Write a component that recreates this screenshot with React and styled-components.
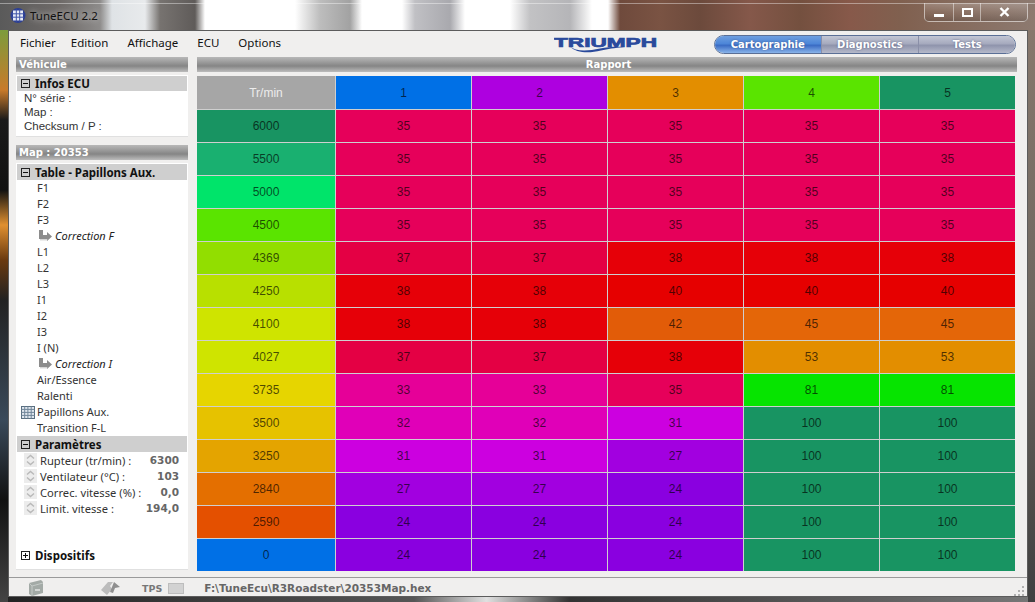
import React from 'react';
import styled, { createGlobalStyle } from 'styled-components';

const GlobalStyle = createGlobalStyle`
  html, body {
    margin: 0;
    padding: 0;
    overflow: hidden;
    background: #222;
  }
`;

const UI_FONT = '"Noto Sans", "DejaVu Sans", sans-serif';
const BOLD_FONT = '"DejaVu Sans", "Noto Sans", sans-serif';
const CELL_FONT = '"Liberation Sans", Arial, sans-serif';

const VALUE_COLORS = {
  24: '#8a00e0',
  27: '#a200e0',
  31: '#cc00e0',
  32: '#e000b8',
  33: '#e60098',
  35: '#e6005a',
  37: '#e40044',
  38: '#e60008',
  40: '#e60000',
  42: '#e25c08',
  45: '#e46608',
  53: '#e38e00',
  81: '#06e400',
  100: '#189462',
};

const HEADERS = [
  { label: '1', color: '#0070e6' },
  { label: '2', color: '#ae00e0' },
  { label: '3', color: '#e38e00' },
  { label: '4', color: '#5ae400' },
  { label: '5', color: '#189462' },
];

const ROWS = [
  { rpm: 6000, color: '#189462', values: [35, 35, 35, 35, 35] },
  { rpm: 5500, color: '#19b070', values: [35, 35, 35, 35, 35] },
  { rpm: 5000, color: '#00e46a', values: [35, 35, 35, 35, 35] },
  { rpm: 4500, color: '#5ae400', values: [35, 35, 35, 35, 35] },
  { rpm: 4369, color: '#92de00', values: [37, 37, 38, 38, 38] },
  { rpm: 4250, color: '#b8e000', values: [38, 38, 40, 40, 40] },
  { rpm: 4100, color: '#cfe400', values: [38, 38, 42, 45, 45] },
  { rpm: 4027, color: '#cfe400', values: [37, 37, 38, 53, 53] },
  { rpm: 3735, color: '#e6d500', values: [33, 33, 35, 81, 81] },
  { rpm: 3500, color: '#e6c200', values: [32, 32, 31, 100, 100] },
  { rpm: 3250, color: '#e4a400', values: [31, 31, 27, 100, 100] },
  { rpm: 2840, color: '#e46f00', values: [27, 27, 24, 100, 100] },
  { rpm: 2590, color: '#e45000', values: [24, 24, 24, 100, 100] },
  { rpm: 0, color: '#0070e6', values: [24, 24, 24, 100, 100] },
];

const PARAMS = [
  { label: 'Rupteur (tr/min) :', value: '6300' },
  { label: 'Ventilateur (°C) :', value: '103' },
  { label: 'Correc. vitesse (%) :', value: '0,0' },
  { label: 'Limit. vitesse :', value: '194,0' },
];

function ExpandBox({ open }) {
  return (
    <svg width="9" height="9" viewBox="0 0 9 9" style={{ flexShrink: 0 }}>
      <rect x="0.5" y="0.5" width="8" height="8" fill="none" stroke="#222" />
      <path d="M2 4.5H7" stroke="#111" />
      {!open && <path d="M4.5 2V7" stroke="#111" />}
    </svg>
  );
}

function AppIcon() {
  return (
    <svg width="16" height="17" viewBox="0 0 16 17">
      <circle cx="8" cy="8.5" r="7.5" fill="#2c3f94" />
      <rect x="3" y="3.5" width="10" height="10" fill="#e8ecf6" />
      <path d="M6.3 2.5V14.5M9.7 2.5V14.5M2 6.8H14M2 10.2H14" stroke="#3f55a8" />
    </svg>
  );
}

function TableIcon() {
  return (
    <svg width="14" height="13" viewBox="0 0 14 13" style={{ flexShrink: 0 }}>
      <rect x="0.5" y="0.5" width="13" height="12" fill="#dfe6ee" stroke="#5a6f80" />
      <path d="M3.7 0.5V12.5M6.9 0.5V12.5M10.2 0.5V12.5M0.5 3.4H13.5M0.5 6.4H13.5M0.5 9.4H13.5" stroke="#71879a" />
    </svg>
  );
}

function CornerArrow() {
  return (
    <svg width="13" height="12" viewBox="0 0 13 12" style={{ flexShrink: 0 }}>
      <path d="M0 0H4V5H8V2L13 6.5L8 11V9H0Z" fill="#8c8c8c" />
      <path d="M1 9.8H8.5" stroke="#c4c4c4" />
    </svg>
  );
}

function Spinner() {
  return (
    <SpinnerBox>
      <svg width="9" height="12" viewBox="0 0 9 12">
        <path d="M1 4.5L4.5 1.5L8 4.5M1 7.5L4.5 10.5L8 7.5" fill="none" stroke="#b9b9b9" strokeWidth="1.4" />
      </svg>
    </SpinnerBox>
  );
}

function TriumphLogo() {
  return (
    <svg width="104" height="20" viewBox="0 0 104 20">
      <text x="0" y="12.5" textLength="103" lengthAdjust="spacingAndGlyphs" fontFamily="Liberation Sans" fontWeight="700" fontSize="13.5" fill="#2a4a9c" stroke="#2a4a9c" strokeWidth="0.7">
        TRIUMPH
      </text>
      <path d="M15 12C22 18 34 17 46 14.5C54 13 61 12.5 70 13C60 14 54 15 47 16.5C35 19.5 23 19.5 15 12Z" fill="#2a4a9c" />
    </svg>
  );
}

function FolderIcon() {
  return (
    <svg width="17" height="18" viewBox="0 0 17 18">
      <path d="M1 4L13 1L15 3V14L4 17L1 15Z" fill="#a3aaa6" />
      <path d="M4 7L15 4M4 17V7L1 4" fill="none" stroke="#c5cac7" />
      <path d="M7 11H12" stroke="#d3d6d4" strokeWidth="2" />
    </svg>
  );
}

function SendIcon() {
  return (
    <svg width="21" height="16" viewBox="0 0 21 16">
      <path d="M1 10L8 2H13L10 6L12 9L7 15Z" fill="#bcbcbc" />
      <path d="M10 12L14 2L20 7L15 8L13 13Z" fill="#8f8f8f" />
    </svg>
  );
}

function ResizeGrip() {
  return (
    <svg width="12" height="12" viewBox="0 0 12 12">
      <path d="M9 0h2v2H9zM5 4h2v2H5zM9 4h2v2H9zM1 8h2v2H1zM5 8h2v2H5zM9 8h2v2H9z" fill="#b0b0b0" />
    </svg>
  );
}

export default function App() {
  return (
    <>
      <GlobalStyle />
      <Desktop>
        <TitleBar>
          <TitleGroup>
            <AppIcon />
            <TitleText>TuneECU 2.2</TitleText>
          </TitleGroup>
          <WindowButtons>
            <WindowButton $w={28}><MinGlyph /></WindowButton>
            <WindowButton $w={26}><MaxGlyph /></WindowButton>
            <WindowButton $w={46} $last>
              <svg width="11" height="10" viewBox="0 0 11 10">
                <path d="M1.5 1L9.5 9M9.5 1L1.5 9" stroke="#fff" strokeWidth="2.4" />
              </svg>
            </WindowButton>
          </WindowButtons>
        </TitleBar>

        <Client>
          <TopRow>
            <Menu>
              <MenuItem>Fichier</MenuItem>
              <MenuItem>Edition</MenuItem>
              <MenuItem>Affichage</MenuItem>
              <MenuItem>ECU</MenuItem>
              <MenuItem>Options</MenuItem>
            </Menu>
            <LogoSlot><TriumphLogo /></LogoSlot>
            <Tabs>
              <Tab $w={107} $active>Cartographie</Tab>
              <Tab $w={98}>Diagnostics</Tab>
              <Tab $w={97}>Tests</Tab>
            </Tabs>
          </TopRow>

          <Body>
            <Sidebar>
              <Bar>Véhicule</Bar>
              <InfoPanel>
                <SectionHead $h={15}><ExpandBox open />Infos ECU</SectionHead>
                <InfoLine>N° série :</InfoLine>
                <InfoLine>Map :</InfoLine>
                <InfoLine>Checksum / P :</InfoLine>
              </InfoPanel>

              <Bar $top={8}>Map : 20353</Bar>
              <TreePanel>
                <SectionHead $h={16}><ExpandBox open />Table - Papillons Aux.</SectionHead>
                <TreeItem>F1</TreeItem>
                <TreeItem>F2</TreeItem>
                <TreeItem>F3</TreeItem>
                <SubItem><CornerArrow /><em>Correction F</em></SubItem>
                <TreeItem>L1</TreeItem>
                <TreeItem>L2</TreeItem>
                <TreeItem>L3</TreeItem>
                <TreeItem>I1</TreeItem>
                <TreeItem>I2</TreeItem>
                <TreeItem>I3</TreeItem>
                <TreeItem>I (N)</TreeItem>
                <SubItem><CornerArrow /><em>Correction I</em></SubItem>
                <TreeItem>Air/Essence</TreeItem>
                <TreeItem>Ralenti</TreeItem>
                <IconItem><TableIcon />Papillons Aux.</IconItem>
                <TreeItem>Transition F-L</TreeItem>
                <SectionHead $h={16}><ExpandBox open />Paramètres</SectionHead>
                {PARAMS.map((param) => (
                  <ParamRow key={param.label}>
                    <Spinner />
                    <ParamLabel>{param.label}</ParamLabel>
                    <ParamValue>{param.value}</ParamValue>
                  </ParamRow>
                ))}
                <DevicesHead><ExpandBox />Dispositifs</DevicesHead>
              </TreePanel>
            </Sidebar>

            <Main>
              <Bar $center>Rapport</Bar>
              <Grid>
                <CornerCell>Tr/min</CornerCell>
                {HEADERS.map((header) => (
                  <Cell key={header.label} $bg={header.color}>{header.label}</Cell>
                ))}
                {ROWS.map((row) => (
                  <React.Fragment key={row.rpm}>
                    <Cell $bg={row.color}>{row.rpm}</Cell>
                    {row.values.map((value, i) => (
                      <Cell key={i} $bg={VALUE_COLORS[value]}>{value}</Cell>
                    ))}
                  </React.Fragment>
                ))}
              </Grid>
            </Main>
          </Body>

          <StatusBar>
            <StatusIcon $w={72}><FolderIcon /></StatusIcon>
            <StatusIcon $w={42}><SendIcon /></StatusIcon>
            <TpsLabel>TPS</TpsLabel>
            <TpsBox />
            <FilePath>F:\TuneEcu\R3Roadster\20353Map.hex</FilePath>
            <Grip><ResizeGrip /></Grip>
          </StatusBar>
        </Client>
      </Desktop>
    </>
  );
}

const Desktop = styled.div`
  width: 1035px;
  height: 602px;
  box-sizing: border-box;
  padding: 0 7px 5px 8px;
  display: flex;
  flex-direction: column;
  overflow: hidden;
  background:
    linear-gradient(rgba(255, 255, 255, 0.4), rgba(255, 255, 255, 0.4)) 0 3px / 100% 1px no-repeat,
    linear-gradient(90deg,
      #5a5a5a 0, #6e6a68 60px, #8d8b8a 100px, #dfe3e6 112px, #e8eaec 145px,
      #777370 160px, #5f5b59 195px, #fff 205px, #fff 295px, #bdbdbd 320px,
      #a2a2a2 350px, #fff 362px, #fff 402px, #c0c0c4 415px, #a9a9ae 450px,
      #fff 465px, #fff 510px, #c2c2c4 530px, #b5b5b8 570px, #fff 592px,
      #fff 608px, #6f4a3c 620px, #7a5343 660px, #6c4a3c 700px, #85584a 750px,
      #74503f 800px, #87594a 850px, #80604f 900px, #8d7a70 1035px
    ) top / 100% 30px no-repeat,
    linear-gradient(180deg, #7c9c3c 30px, #c87a2a 90px, #1a1a1a 120px, #111 190px, #e09030 225px, #6a3a10 260px, #222 300px, #3a4a5a 420px, #111 500px, #444 602px) left / 8px 100% no-repeat,
    linear-gradient(180deg, #8a7a6e 0, #6f6760 300px, #3f3f3f 602px) right / 7px 100% no-repeat,
    linear-gradient(90deg, #222, #555 40%, #e0e0e0 47%, #333 55%, #777) bottom / 100% 5px no-repeat;
`;

const TitleBar = styled.div`
  height: 30px;
  flex-shrink: 0;
  margin-left: 2px;
  display: flex;
  justify-content: space-between;
  align-items: flex-start;
`;

const TitleGroup = styled.div`
  display: flex;
  align-items: center;
  gap: 4px;
  margin-top: 7px;
`;

const TitleText = styled.span`
  font: 11.5px ${UI_FONT};
  color: #111;
  text-shadow: 0 0 6px rgba(255, 255, 255, 0.8);
`;

const WindowButtons = styled.div`
  display: flex;
  height: 18px;
  margin: 3px 0 0;
  border: 1px solid rgba(255, 255, 255, 0.55);
  border-top: 0;
  border-radius: 0 0 5px 5px;
`;

const WindowButton = styled.div`
  width: ${(p) => p.$w}px;
  display: flex;
  align-items: center;
  justify-content: center;
  background: linear-gradient(180deg, rgba(255, 255, 255, 0.22), rgba(255, 255, 255, 0.05) 50%, rgba(0, 0, 0, 0.12));
  border-right: ${(p) => (p.$last ? '0' : '1px solid rgba(255, 255, 255, 0.45)')};
`;

const MinGlyph = styled.span`
  display: block;
  width: 10px;
  height: 3px;
  margin-top: 6px;
  background: #fff;
`;

const MaxGlyph = styled.span`
  display: block;
  width: 7px;
  height: 5px;
  border: 2px solid #fff;
`;

const Client = styled.div`
  flex: 1;
  min-height: 0;
  display: flex;
  flex-direction: column;
  background: #f0efee;
  border: 1px solid #5c5c5c;
  box-sizing: border-box;
`;

const TopRow = styled.div`
  height: 26px;
  box-sizing: border-box;
  padding-bottom: 2px;
  flex-shrink: 0;
  display: flex;
  align-items: center;
`;

const Menu = styled.div`
  display: flex;
  gap: 19px;
  padding-left: 11px;
  margin-top: -1px;
  width: 545px;
  box-sizing: border-box;
`;

const MenuItem = styled.span`
  font: 11.5px ${UI_FONT};
  color: #111;
  &:first-child {
    margin-right: -4px;
  }
`;

const LogoSlot = styled.div`
  width: 160px;
  height: 20px;
  margin-top: 1px;
`;

const Tabs = styled.div`
  display: flex;
  height: 19px;
  border: 1px solid #5a6f96;
  border-radius: 10px;
  overflow: hidden;
  box-sizing: border-box;
  margin-top: 3px;
  width: 302px;
`;

const Tab = styled.div`
  width: ${(p) => p.$w}px;
  display: flex;
  align-items: center;
  justify-content: center;
  font: bold 10px ${BOLD_FONT};
  color: #fff;
  text-shadow: 0 0 2px rgba(60, 70, 110, 0.7);
  background: ${(p) => (p.$active
    ? 'linear-gradient(180deg, #6e9fe0 0, #4d86d8 45%, #3a6cc4 55%, #8ab4ea 100%)'
    : 'linear-gradient(180deg, #c2c6d4 0, #a6aabe 45%, #8f94ac 55%, #b5b9ca 100%)')};
  & + & {
    border-left: 1px solid #8a8fa8;
  }
`;

const Body = styled.div`
  flex: 1;
  min-height: 0;
  display: flex;
  gap: 9px;
  padding-left: 7px;
`;

const Sidebar = styled.div`
  width: 172px;
  flex-shrink: 0;
  display: flex;
  flex-direction: column;
`;

const Main = styled.div`
  width: 820px;
  flex-shrink: 0;
  display: flex;
  flex-direction: column;
`;

const Bar = styled.div`
  height: 15px;
  flex-shrink: 0;
  margin-top: ${(p) => p.$top || 0}px;
  padding-left: 3px;
  text-align: ${(p) => (p.$center ? 'center' : 'left')};
  font: bold 10px/16px ${BOLD_FONT};
  color: #fff;
  background: linear-gradient(180deg, #b8b8b8 0, #929292 45%, #858585 60%, #bcbcbc 100%);
`;

const InfoPanel = styled.div`
  height: 62px;
  flex-shrink: 0;
  margin-top: 3px;
  padding: 1px;
  box-sizing: border-box;
  background: #fff;
  border-bottom: 1px solid #e0e0e0;
`;

const SectionHead = styled.div`
  height: ${(p) => p.$h}px;
  flex-shrink: 0;
  display: flex;
  align-items: center;
  gap: 5px;
  padding-left: 4px;
  background: #cfcfcf;
  font: bold 11.5px ${UI_FONT};
  color: #111;
`;

const InfoLine = styled.div`
  height: 14px;
  padding-left: 7px;
  font: 11.5px/14px ${CELL_FONT};
  color: #333;
`;

const TreePanel = styled.div`
  flex: 1;
  min-height: 0;
  margin: 3px 0 1px;
  padding: 1px;
  display: flex;
  flex-direction: column;
  background: #fff;
  border-bottom: 1px solid #e0e0e0;
`;

const TreeItem = styled.div`
  height: 16px;
  flex-shrink: 0;
  padding-left: 20px;
  font: 11px/16px ${UI_FONT};
  color: #333;
`;

const SubItem = styled.div`
  height: 16px;
  flex-shrink: 0;
  display: flex;
  align-items: center;
  gap: 3px;
  padding-left: 22px;
  font: 11px/16px ${UI_FONT};
  color: #222;
`;

const IconItem = styled.div`
  height: 16px;
  flex-shrink: 0;
  display: flex;
  align-items: center;
  gap: 2px;
  padding-left: 4px;
  font: 11px/16px ${UI_FONT};
  color: #333;
`;

const ParamRow = styled.div`
  height: 16px;
  flex-shrink: 0;
  display: flex;
  align-items: center;
  padding: 0 8px 0 7px;
`;

const SpinnerBox = styled.div`
  width: 13px;
  height: 14px;
  margin-right: 3px;
  display: flex;
  align-items: center;
  justify-content: center;
  background: #ececec;
`;

const ParamLabel = styled.span`
  flex: 1;
  font: 11.2px ${UI_FONT};
  color: #333;
  white-space: nowrap;
`;

const ParamValue = styled.span`
  font: bold 10.5px ${BOLD_FONT};
  color: #666;
`;

const DevicesHead = styled.div`
  margin-top: auto;
  margin-bottom: 5px;
  display: flex;
  align-items: center;
  gap: 5px;
  padding-left: 4px;
  height: 16px;
  font: bold 11.5px ${UI_FONT};
  color: #111;
`;

const Grid = styled.div`
  width: 818px;
  margin-top: 4px;
  display: grid;
  grid-template-columns: 138px repeat(5, 135px);
  grid-template-rows: 33px;
  grid-auto-rows: 32px;
  gap: 1px;
  background: #cfcfcf;
`;

const Cell = styled.div`
  display: flex;
  align-items: center;
  justify-content: center;
  background: ${(p) => p.$bg};
  font: 12px ${CELL_FONT};
  color: rgba(0, 0, 0, 0.68);
`;

const CornerCell = styled(Cell)`
  background: #a6a6a6;
  color: #ececec;
`;

const StatusBar = styled.div`
  height: 19px;
  box-sizing: border-box;
  flex-shrink: 0;
  margin-top: 6px;
  display: flex;
  align-items: center;
  border-top: 1px solid #9a9a9a;
  padding: 2px 0 0 19px;
  position: relative;
`;

const StatusIcon = styled.div`
  width: ${(p) => p.$w}px;
  flex-shrink: 0;
  display: flex;
  align-items: center;
`;

const TpsLabel = styled.span`
  font: bold 9.5px ${BOLD_FONT};
  color: #777;
  margin-right: 6px;
`;

const TpsBox = styled.div`
  width: 16px;
  height: 11px;
  background: #d2d2d2;
  border: 1px solid #bdbdbd;
  box-sizing: border-box;
  margin-right: 20px;
`;

const FilePath = styled.span`
  font: bold 10.5px ${BOLD_FONT};
  color: #666;
`;

const Grip = styled.div`
  position: absolute;
  right: 2px;
  bottom: 0;
  height: 12px;
`;
